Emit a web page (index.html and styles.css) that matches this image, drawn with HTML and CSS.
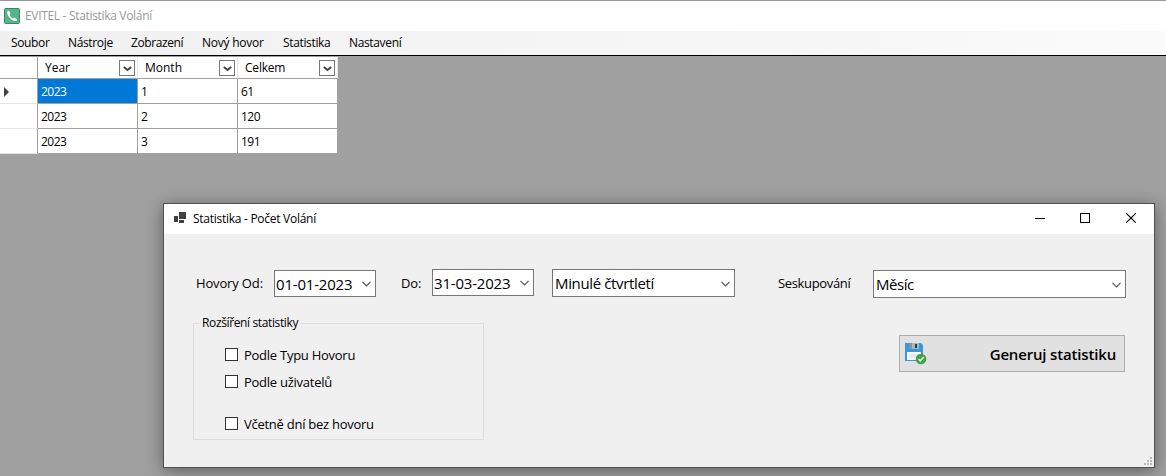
FILE: index.html
```html
<!DOCTYPE html>
<html lang="cs">
<head>
<meta charset="utf-8">
<title>EVITEL - Statistika Volání</title>
<link rel="stylesheet" href="styles.css">
</head>
<body>
<div class="app">
  <header class="app-title">
    <svg class="app-icon" width="16" height="16" viewBox="0 0 16 16"><rect x=".5" y=".5" width="15" height="15" rx="1" fill="#55b587" stroke="#378763"/><path d="M3.3 3.2 4.8 2.7 6.5 5.3 5.5 6.7C6.2 8.4 7.3 9.6 9.1 10.5L10.5 9.7 13.1 11.3 12.7 12.8C8.5 14.2 2 7.2 3.3 3.2Z" fill="#fff"/></svg>
    <span>EVITEL - Statistika Volání</span>
  </header>
  <nav class="menu">
    <span class="m1">Soubor</span><span class="m2">Nástroje</span><span class="m3">Zobrazení</span><span class="m4">Nový hovor</span><span class="m5">Statistika</span><span class="m6">Nastavení</span>
  </nav>
  <main class="workspace">
    <div class="grid">
      <div class="corner"></div>
      <div class="head"><span>Year</span><i class="drop"><svg width="9" height="6" viewBox="0 0 9 6"><path d="M.8 1 4.5 4 8.2 1" fill="none" stroke="#444" stroke-width="2"/></svg></i></div>
      <div class="head"><span>Month</span><i class="drop"><svg width="9" height="6" viewBox="0 0 9 6"><path d="M.8 1 4.5 4 8.2 1" fill="none" stroke="#444" stroke-width="2"/></svg></i></div>
      <div class="head"><span class="celkem">Celkem</span><i class="drop"><svg width="9" height="6" viewBox="0 0 9 6"><path d="M.8 1 4.5 4 8.2 1" fill="none" stroke="#444" stroke-width="2"/></svg></i></div>
      <div class="rowhead"><svg width="5" height="10" viewBox="0 0 5 10"><path d="M0 0 5 5 0 10Z" fill="#404040"/></svg></div>
      <div class="cell selected">2023</div><div class="cell">1</div><div class="cell">61</div>
      <div class="rowhead"></div><div class="cell">2023</div><div class="cell">2</div><div class="cell">120</div>
      <div class="rowhead"></div><div class="cell">2023</div><div class="cell">3</div><div class="cell">191</div>
    </div>
  </main>
</div>

<section class="dialog">
  <header class="dialog-title">
    <svg class="form-icon" width="12" height="11" viewBox="0 0 12 11" shape-rendering="crispEdges"><path d="M5 0h7v7H5zM0 4h4v6H0zM5 8h5v3H5z" fill="#404040"/></svg>
    <span class="dialog-name">Statistika - Počet Volání</span>
    <svg class="controls" width="102" height="11" viewBox="0 0 102 11" fill="none" stroke="#000"><path d="M0 5.5h10M45.500 .5h9v9h-9z" shape-rendering="crispEdges"/><path d="M91.300 .3l9.400 9.400M100.700 .3l-9.400 9.400" stroke-width="1.100"/></svg>
  </header>
  <div class="filters">
    <label class="lbl from">Hovory Od:</label>
    <div class="field date"><span>01-01-2023</span><svg width="9" height="6" viewBox="0 0 9 6"><path class="chev" d="M.5 .8 4.500 4.800 8.500 .8"/></svg></div>
    <label class="lbl to">Do:</label>
    <div class="field date second"><span>31-03-2023</span><svg width="9" height="6" viewBox="0 0 9 6"><path class="chev" d="M.5 .8 4.500 4.800 8.500 .8"/></svg></div>
    <div class="field period"><span>Minulé čtvrtletí</span><svg width="9" height="6" viewBox="0 0 9 6"><path class="chev" d="M.5 .8 4.500 4.800 8.500 .8"/></svg></div>
    <label class="lbl group">Seskupování</label>
    <div class="field grouping"><span>Měsíc</span><svg width="9" height="6" viewBox="0 0 9 6"><path class="chev" d="M.5 .8 4.500 4.800 8.500 .8"/></svg></div>
  </div>
  <div class="lower">
    <div class="groupbox">
      <span class="legend">Rozšíření statistiky</span>
      <label class="check"><i class="box"></i><span>Podle Typu Hovoru</span></label>
      <label class="check"><i class="box"></i><span>Podle uživatelů</span></label>
      <label class="check last"><i class="box"></i><span>Včetně dní bez hovoru</span></label>
    </div>
    <button class="generate">
      <svg width="22" height="22" viewBox="0 0 22 22"><path d="M0 0h16l2 2v16H0z" fill="#3697d9"/><path d="M4 0h10v6H4z" fill="#a7b5bd"/><path d="M4 0h3v6H4z" fill="#7995a6"/><path d="M10 1h2v4h-2z" fill="#263b47"/><path d="M2 9h14v8H2z" fill="#fafafa"/><path d="M4 11h10v4H4z" fill="#e5eaed"/><circle cx="16" cy="16" r="5.300" fill="#43a047"/><path d="m13.500 16 1.800 1.800 3.400-3.700" fill="none" stroke="#e6f7dc" stroke-width="1.500"/></svg>
      <span>Generuj statistiku</span>
    </button>
  </div>
  <svg class="grip" width="8" height="8" viewBox="0 0 8 8" shape-rendering="crispEdges"><path d="M6 0h2v2H6zM3 3h2v2H3zM6 3h2v2H6zM0 6h2v2H0zM3 6h2v2H3zM6 6h2v2H6z" fill="#bbb"/></svg>
</section>
</body>
</html>
```
FILE: styles.css
```css
* { box-sizing: border-box; }
body { margin: 0; width: 1166px; height: 476px; overflow: hidden; position: relative; background: #a0a0a0; color: #000; font: 12px/16px "Open Sans", "Noto Sans", sans-serif; white-space: nowrap; }
svg { display: block; flex: none; }
.app { height: 476px; display: flex; flex-direction: column; }
.app-title { height: 31px; border-top: 1px solid #999; background: #fff; display: flex; align-items: center; padding: 0 0 1px 4px; gap: 5px; color: #999; letter-spacing: -.32px; }
.app-title span { padding-top: 1px; }
.menu { height: 25px; background: linear-gradient(90deg, #f0f0f0, #fafafa); border-bottom: 1px solid #000; display: flex; align-items: center; padding: 0 0 0 11px; letter-spacing: -.35px; }
.m1 { width: 57px; }
.m2 { width: 63px; }
.m3 { width: 71px; letter-spacing: -.4px; }
.m4 { width: 81px; letter-spacing: -.23px; }
.m5 { width: 66px; }
.workspace { flex: 1; background: #a0a0a0; }
.grid { width: 338px; display: grid; grid-template-columns: 38px repeat(3, 100px); grid-template-rows: 22px repeat(3, 25px); letter-spacing: -.5px; border-top: 1px solid #a0a0a0; }
.corner { background: #fff; border-right: 1px solid #a0a0a0; border-bottom: 1px solid #a0a0a0; }
.head { background: #fff; border-right: 1px solid #e5e5e5; border-bottom: 1px solid #a0a0a0; display: flex; align-items: center; justify-content: space-between; padding: 0 2px 0 7px; letter-spacing: 0; }
.celkem { letter-spacing: -.2px; }
.drop { width: 16px; height: 16px; border: 1px solid #777; display: flex; align-items: center; justify-content: center; padding-top: 2px; }
.cell { background: #fff; border-right: 1px solid #a0a0a0; border-bottom: 1px solid #a0a0a0; padding: 5px 3px 0; }
.selected { background: #0078d7; color: #fff; }
.rowhead { background: #fff; border-right: 1px solid #a0a0a0; border-bottom: 1px solid #e5e5e5; display: flex; align-items: center; padding: 2px 0 0 4px; }

.dialog { position: absolute; left: 163px; top: 203px; width: 992px; height: 265px; background: #f0f0f0; border: 1px solid #505050; box-shadow: 0 3px 16px rgba(0,0,0,.4); }
.dialog-title { height: 30px; background: #fff; display: flex; align-items: center; padding: 0 17px 0 10px; }
.form-icon { margin-bottom: 3px; }
.controls { margin-bottom: 2px; }
.dialog-name { margin-left: 7px; letter-spacing: -.27px; }
.controls { margin-left: auto; }
.filters { height: 65px; padding: 35px 28px 0 32px; display: flex; align-items: flex-start; }
.lbl { font-size: 13px; line-height: 18px; margin-top: 5px; letter-spacing: -.15px; }
.from { width: 78px; }
.to { width: 31px; margin-left: 25px; }
.field { height: 28px; background: #fff; border: 1px solid #777; display: flex; align-items: center; justify-content: space-between; font-size: 15px; line-height: 20px; padding: 0 4px 0 2px; }
.field svg { margin-top: 2px; }
.chev { fill: none; stroke: #555; stroke-width: 1.2; }
.date { width: 102px; height: 27px; margin-top: 1px; padding: 0 4px 0 1px; letter-spacing: -.2px; }
.date svg { margin-top: 0; }
.date.second { margin-top: 0; }
.period { width: 183px; margin-left: 18px; letter-spacing: -.36px; }
.group { width: 95px; margin-left: 43px; letter-spacing: -.35px; }
.grouping { width: 253px; margin-top: 1px; letter-spacing: -.45px; }
.field.period span, .field.grouping span { padding-bottom: 1px; }
.lower { display: flex; justify-content: space-between; align-items: flex-start; padding: 24px 29px 0; }
.groupbox { width: 291px; height: 117px; border: 1px solid #dcdcdc; padding: 0 0 0 31px; }
.legend { display: block; width: 101px; height: 16px; margin: -9px 0 0 -26px; padding-left: 3px; background: #f0f0f0; letter-spacing: -.37px; }
.check { display: flex; align-items: center; gap: 6px; height: 18px; margin-top: 9px; font-size: 13px; line-height: 18px; letter-spacing: -.26px; }
.check span { padding-top: 2px; }
.legend + .check { margin-top: 14px; }
.check.last { margin-top: 24px; }
.box { width: 13px; height: 13px; background: #fff; border: 1px solid #333; }
.generate { width: 226px; height: 37px; margin-top: 12px; border: 1px solid #adadad; background: #e1e1e1; padding: 0 8px 0 5px; display: flex; align-items: center; justify-content: space-between; font: 600 15px/20px "Open Sans", "Noto Sans", sans-serif; letter-spacing: -.17px; color: #000; }
.grip { position: absolute; right: 2px; bottom: 2px; }
```
